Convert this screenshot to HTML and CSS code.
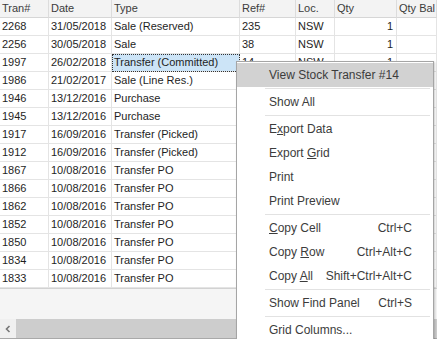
FILE: index.html
```html
<!DOCTYPE html>
<html lang="en">
<head>
    <meta charset="UTF-8">
    <title>Stock Transactions</title>
    <link rel="stylesheet" href="styles.css">
</head>
<body>
    <div class="grid">
        <div class="row head">
            <div class="cell">Tran#</div>
            <div class="cell">Date</div>
            <div class="cell">Type</div>
            <div class="cell">Ref#</div>
            <div class="cell">Loc.</div>
            <div class="cell">Qty</div>
            <div class="cell">Qty Bal</div>
        </div>
        <div class="row">
            <div class="cell">2268</div><div class="cell">31/05/2018</div><div class="cell">Sale (Reserved)</div>
            <div class="cell">235</div><div class="cell">NSW</div><div class="cell num">1</div><div class="cell"></div>
        </div>
        <div class="row">
            <div class="cell">2256</div><div class="cell">30/05/2018</div><div class="cell">Sale</div>
            <div class="cell">38</div><div class="cell">NSW</div><div class="cell num">1</div><div class="cell"></div>
        </div>
        <div class="row">
            <div class="cell">1997</div><div class="cell">26/02/2018</div><div class="cell focused">Transfer (Committed)</div>
            <div class="cell">14</div><div class="cell">NSW</div><div class="cell num">1</div><div class="cell"></div>
        </div>
        <div class="row">
            <div class="cell">1986</div><div class="cell">21/02/2017</div><div class="cell">Sale (Line Res.)</div>
            <div class="cell"></div><div class="cell"></div><div class="cell"></div><div class="cell"></div>
        </div>
        <div class="row">
            <div class="cell">1946</div><div class="cell">13/12/2016</div><div class="cell">Purchase</div>
            <div class="cell"></div><div class="cell"></div><div class="cell"></div><div class="cell"></div>
        </div>
        <div class="row">
            <div class="cell">1945</div><div class="cell">13/12/2016</div><div class="cell">Purchase</div>
            <div class="cell"></div><div class="cell"></div><div class="cell"></div><div class="cell"></div>
        </div>
        <div class="row">
            <div class="cell">1917</div><div class="cell">16/09/2016</div><div class="cell">Transfer (Picked)</div>
            <div class="cell"></div><div class="cell"></div><div class="cell"></div><div class="cell"></div>
        </div>
        <div class="row">
            <div class="cell">1912</div><div class="cell">16/09/2016</div><div class="cell">Transfer (Picked)</div>
            <div class="cell"></div><div class="cell"></div><div class="cell"></div><div class="cell"></div>
        </div>
        <div class="row">
            <div class="cell">1867</div><div class="cell">10/08/2016</div><div class="cell">Transfer PO</div>
            <div class="cell"></div><div class="cell"></div><div class="cell"></div><div class="cell"></div>
        </div>
        <div class="row">
            <div class="cell">1866</div><div class="cell">10/08/2016</div><div class="cell">Transfer PO</div>
            <div class="cell"></div><div class="cell"></div><div class="cell"></div><div class="cell"></div>
        </div>
        <div class="row">
            <div class="cell">1862</div><div class="cell">10/08/2016</div><div class="cell">Transfer PO</div>
            <div class="cell"></div><div class="cell"></div><div class="cell"></div><div class="cell"></div>
        </div>
        <div class="row">
            <div class="cell">1852</div><div class="cell">10/08/2016</div><div class="cell">Transfer PO</div>
            <div class="cell"></div><div class="cell"></div><div class="cell"></div><div class="cell"></div>
        </div>
        <div class="row">
            <div class="cell">1850</div><div class="cell">10/08/2016</div><div class="cell">Transfer PO</div>
            <div class="cell"></div><div class="cell"></div><div class="cell"></div><div class="cell"></div>
        </div>
        <div class="row">
            <div class="cell">1834</div><div class="cell">10/08/2016</div><div class="cell">Transfer PO</div>
            <div class="cell"></div><div class="cell"></div><div class="cell"></div><div class="cell"></div>
        </div>
        <div class="row">
            <div class="cell">1833</div><div class="cell">10/08/2016</div><div class="cell">Transfer PO</div>
            <div class="cell"></div><div class="cell"></div><div class="cell"></div><div class="cell"></div>
        </div>
        <div class="filler"></div>
        <div class="hscroll">
            <div class="arrow">
                <svg width="8" height="8" viewBox="0 0 8 8"><path d="M5.5 1 L2.5 4 L5.5 7" fill="none" stroke="#777" stroke-width="1.6"/></svg>
            </div>
            <div class="thumb"></div>
        </div>
    </div>

    <div class="menu">
        <div class="item hover"><span>View Stock Transfer #14</span></div>
        <div class="sep"></div>
        <div class="item"><span>Show All</span></div>
        <div class="sep"></div>
        <div class="item"><span>E<u>x</u>port Data</span></div>
        <div class="item"><span>Export <u>G</u>rid</span></div>
        <div class="item"><span>Print</span></div>
        <div class="item"><span>Print Preview</span></div>
        <div class="sep"></div>
        <div class="item"><span><u>C</u>opy Cell</span><span>Ctrl+C</span></div>
        <div class="item"><span>Copy <u>R</u>ow</span><span>Ctrl+Alt+C</span></div>
        <div class="item"><span>Copy <u>A</u>ll</span><span>Shift+Ctrl+Alt+C</span></div>
        <div class="sep"></div>
        <div class="item"><span>Show Find Panel</span><span>Ctrl+S</span></div>
        <div class="sep"></div>
        <div class="item"><span>Grid Columns...</span></div>
    </div>
</body>
</html>
```

FILE: styles.css
```css
body {
    margin: 0;
    width: 437px;
    height: 339px;
    overflow: hidden;
    font-family: "Liberation Sans", Arial, sans-serif;
    font-size: 11px;
    color: #1e1e1e;
    background: #fff;
}
.grid {
    display: flex;
    flex-direction: column;
    height: 338px;
    border-bottom: 1px solid #a9a9a9;
}
.row {
    display: grid;
    grid-template-columns: 49px 63px 128px 56px 39px 62px 1fr;
    height: 18px;
}
.cell {
    border-right: 1px solid #e4e4e4;
    border-bottom: 1px solid #e4e4e4;
    padding: 0 3px 0 2px;
    line-height: 17px;
    white-space: nowrap;
    overflow: hidden;
}
.head .cell {
    background: #f3f3f3;
    color: #3b3b3b;
    border-bottom-color: #d6d6d6;
    border-right-color: #dcdcdc;
}
.num {
    text-align: right;
}
.focused {
    background: #cce4f7;
    outline: 1px dotted #333;
    outline-offset: -1px;
}
.filler {
    flex: 1;
    background: #f5f5f5;
    border-top: 1px solid #d2d2d2;
}
.hscroll {
    display: flex;
    height: 19px;
    background: #f0f0f0;
}
.arrow {
    width: 16px;
    display: flex;
    align-items: center;
    justify-content: center;
}
.thumb {
    flex: 1;
    background: #cdcdcd;
}
.menu {
    position: absolute;
    left: 236px;
    top: 61px;
    width: 196px;
    background: #fff;
    border: 1px solid #a5a5a5;
    padding: 1px 0;
    font-size: 12px;
    color: #3c3c3c;
    box-shadow: 1px 1px 2px rgba(0, 0, 0, 0.2);
}
.item {
    display: flex;
    justify-content: space-between;
    height: 24px;
    line-height: 24px;
    padding: 0 21px 0 32px;
    white-space: nowrap;
}
.item.hover {
    background: #d2d2d2;
}
.sep {
    height: 1px;
    margin: 1px 3px 1px 28px;
    background: #e2e2e2;
}
```
